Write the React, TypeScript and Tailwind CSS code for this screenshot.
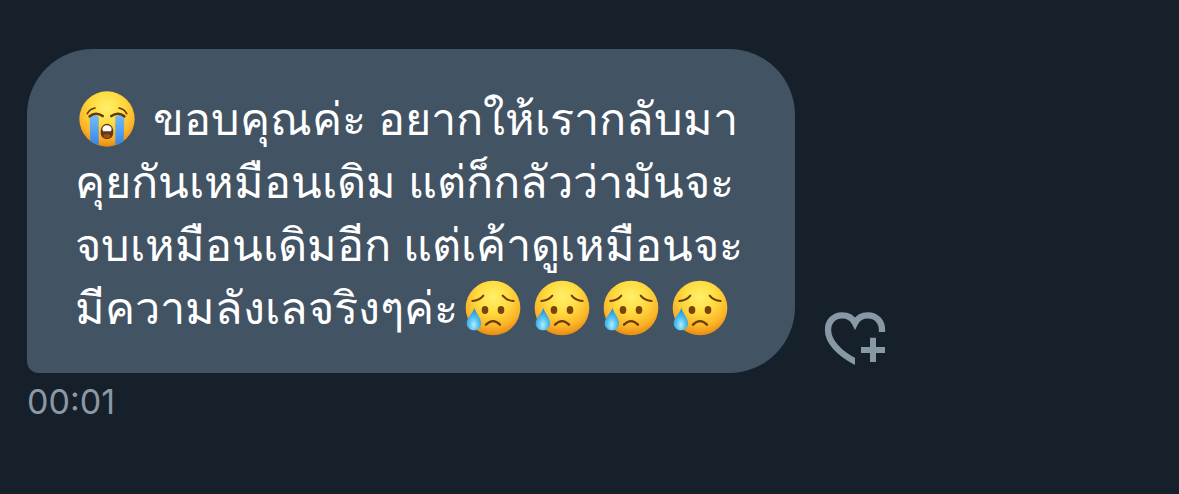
const CryingEmoji = () => (
  <svg
    role="img"
    aria-label="😭"
    viewBox="0 0 192 192"
    className="mr-3.5 inline-block size-16 shrink-0"
  >
    <defs>
      <radialGradient id="cry-face" cx="0.5" cy="0.3" r="0.72">
        <stop offset="0" stopColor="#fff06a" />
        <stop offset="0.4" stopColor="#ffdc40" />
        <stop offset="0.75" stopColor="#fbb428" />
        <stop offset="1" stopColor="#e58510" />
      </radialGradient>
      <linearGradient id="cry-tear" x1="0" y1="0" x2="0" y2="1">
        <stop offset="0" stopColor="#76b9f3" />
        <stop offset="0.55" stopColor="#4f9df0" />
        <stop offset="1" stopColor="#2f7fe0" />
      </linearGradient>
      <clipPath id="cry-clip">
        <circle cx="96" cy="96" r="83" />
      </clipPath>
    </defs>
    <circle cx="96" cy="96" r="83" fill="url(#cry-face)" />
    <g clipPath="url(#cry-clip)">
      <path d="M44 88Q57 80 71 89V182H46Z" fill="url(#cry-tear)" />
      <path d="M148 88Q135 80 121 89V182H146Z" fill="url(#cry-tear)" />
    </g>
    <g fill="none" stroke="#66370a" strokeLinecap="round">
      <path d="M44 88Q62 73 83 87" strokeWidth="8" />
      <path d="M148 88Q130 73 109 87" strokeWidth="8" />
      <path d="M37 80Q44 66 60 63" strokeWidth="5" />
      <path d="M155 80Q148 66 132 63" strokeWidth="5" />
    </g>
    <path
      d="M96 110C108 110 115 121 115 135C115 149 108 156 96 156S77 149 77 135C77 121 84 110 96 110Z"
      fill="#66370e"
    />
    <path d="M82 126Q84 115 96 115T110 126L108 133H84Z" fill="#fff" />
    <ellipse cx="96" cy="147" rx="11" ry="6" fill="#96511d" />
  </svg>
);

const SadEmoji = () => (
  <svg
    role="img"
    aria-label="😥"
    viewBox="0 0 192 192"
    className="inline-block size-16 shrink-0"
  >
    <defs>
      <radialGradient id="sad-face" cx="0.5" cy="0.3" r="0.72">
        <stop offset="0" stopColor="#fff06a" />
        <stop offset="0.4" stopColor="#ffdc40" />
        <stop offset="0.75" stopColor="#fbb428" />
        <stop offset="1" stopColor="#e58510" />
      </radialGradient>
      <radialGradient id="sad-tear" cx="0.5" cy="0.75" r="0.7">
        <stop offset="0" stopColor="#b5ecfb" />
        <stop offset="0.4" stopColor="#5cc8f4" />
        <stop offset="1" stopColor="#1c8cd8" />
      </radialGradient>
    </defs>
    <circle cx="90" cy="96" r="82" fill="url(#sad-face)" />
    <g fill="none" stroke="#6b3a0a" strokeLinecap="round">
      <path d="M28 75Q49 74 61 59" strokeWidth="6" />
      <path d="M152 75Q131 74 119 59" strokeWidth="6" />
      <path d="M69 146Q90 125 111 146" strokeWidth="7" />
    </g>
    <ellipse cx="66" cy="102" rx="10" ry="12" fill="#7a430b" />
    <ellipse cx="114" cy="102" rx="10" ry="12" fill="#7a430b" />
    <path
      d="M34 96C39 112 54 126 54 142C54 155 45 163 33 163S11 155 11 142C11 126 29 112 34 96Z"
      fill="url(#sad-tear)"
    />
  </svg>
);

const HeartPlusIcon = () => (
  <svg viewBox="0 0 186 162" className="h-[54px] w-[62px]" aria-hidden="true">
    <defs>
      <clipPath id="heart-cut">
        <path d="M0 0H186V63H93V162H0Z" />
      </clipPath>
    </defs>
    <path
      d="M174 70V56C174 32 157 13 132 13C113 13 100 22 93 36C86 22 73 13 54 13C29 13 12 32 12 56C12 92 46 127 93 151L110 159"
      fill="none"
      stroke="#8899a6"
      strokeWidth="19"
      clipPath="url(#heart-cut)"
    />
    <path d="M138 80H156V108H183V126H156V153H138V126H111V108H138Z" fill="#8899a6" />
  </svg>
);

export default function App() {
  return (
    <main className="min-h-screen bg-[#15202b] px-[27px] pt-[49px] font-['Inter','Noto_Sans',sans-serif]">
      <div className="flex items-end gap-[29px]">
        <div className="w-full max-w-3xl rounded-[66px] rounded-bl-xl bg-[#425364] px-12 pt-[38px] pb-[34px] text-[45px] leading-[63px] font-medium text-white">
          <p lang="th" className="whitespace-nowrap">
            <span className="flex h-[63px] items-center">
              <CryingEmoji />
              ขอบคุณค่ะ อยากให้เรากลับมา
            </span>
            <span className="block">คุยกันเหมือนเดิม แต่ก็กลัวว่ามันจะ</span>
            <span className="block">จบเหมือนเดิมอีก แต่เค้าดูเหมือนจะ</span>
            <span className="flex h-[63px] items-center gap-[5px]">
              มีความลังเลจริงๆค่ะ
              <SadEmoji />
              <SadEmoji />
              <SadEmoji />
              <SadEmoji />
            </span>
          </p>
        </div>
        <button type="button" aria-label="Add reaction" className="mb-2 shrink-0">
          <HeartPlusIcon />
        </button>
      </div>
      <time className="mt-2 block text-[34px] leading-[42px] text-[#8b98a5]">00:01</time>
    </main>
  );
}
